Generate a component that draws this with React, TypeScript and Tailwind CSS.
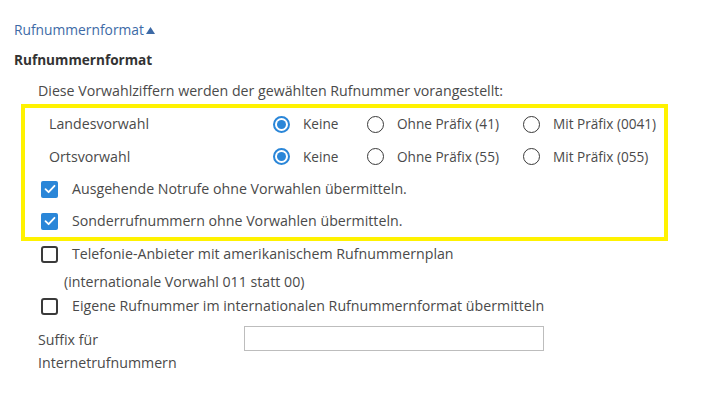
import React from 'react'

const font = { fontFamily: '"Open Sans", "Noto Sans", sans-serif' }

function Radio({ checked }: { checked?: boolean }) {
  return checked ? (
    <span className="flex h-[17px] w-[17px] shrink-0 items-center justify-center rounded-full border-2 border-[#2a86d8]">
      <span className="h-[9px] w-[9px] rounded-full bg-[#2a86d8]" />
    </span>
  ) : (
    <span className="h-[17px] w-[17px] shrink-0 rounded-full border-[1.5px] border-[#3a3a3a]" />
  )
}

function Checkbox({ checked }: { checked?: boolean }) {
  return checked ? (
    <span className="flex h-[17px] w-[17px] shrink-0 items-center justify-center rounded-[2px] bg-[#2a86d8]">
      <svg width="12" height="10" viewBox="0 0 12 10" fill="none">
        <path d="M1.5 5.2 L4.6 8.2 L10.5 1.8" stroke="white" strokeWidth="1.8" strokeLinecap="round" strokeLinejoin="round" />
      </svg>
    </span>
  ) : (
    <span className="h-[17px] w-[17px] shrink-0 rounded-[3px] border-2 border-[#3a3a3a]" />
  )
}

const rows = [
  { label: 'Landesvorwahl', opts: ['Keine', 'Ohne Präfix (41)', 'Mit Präfix (0041)'] },
  { label: 'Ortsvorwahl', opts: ['Keine', 'Ohne Präfix (55)', 'Mit Präfix (055)'] },
]

const colW = ['w-[94px]', 'w-[156px]', 'w-[140px]']

export default function App() {
  return (
    <div className="min-h-[393px] w-[721px] bg-white pl-[14px] pt-5 text-[14.2px] leading-5 text-[#4a4a4a]" style={font}>
      <div className="flex items-center text-[13.8px] text-[#3d6aa6]">
        Rufnummernformat
        <svg width="9" height="7" viewBox="0 0 9 7" className="ml-[2px]">
          <path d="M0 7 L4.5 0 L9 7 Z" fill="#3d6aa6" />
        </svg>
      </div>
      <div className="mt-[10px] text-[13.6px] font-bold text-[#333]">Rufnummernformat</div>
      <div className="mt-[11px] pl-6">Diese Vorwahlziffern werden der gewählten Rufnummer vorangestellt:</div>

      <div className="ml-[7px] mt-[3px] w-[647px] border-4 border-[#fff200]">
        {rows.map((r, i) => (
          <div key={r.label} className={`flex items-center ${i === 0 ? 'h-[32px]' : 'h-[33px]'}`}>
            <div className="w-[248px] pl-6">{r.label}</div>
            {r.opts.map((o, j) => (
              <div key={o} className={`flex items-center gap-[13px] text-[13.6px] ${colW[j]}`}>
                <Radio checked={j === 0} />
                <span>{o}</span>
              </div>
            ))}
          </div>
        ))}
        {['Ausgehende Notrufe ohne Vorwahlen übermitteln.', 'Sonderrufnummern ohne Vorwahlen übermitteln.'].map(t => (
          <div key={t} className="flex h-[32px] items-center gap-[14px] pl-4">
            <Checkbox checked />
            <span>{t}</span>
          </div>
        ))}
      </div>

      <div className="flex h-[26px] items-center gap-[14px] pl-[27px]">
        <Checkbox />
        <span>Telefonie-Anbieter mit amerikanischem Rufnummernplan</span>
      </div>
      <div className="flex h-[29px] items-center pl-[50px]">(internationale Vorwahl 011 statt 00)</div>
      <div className="flex h-[20px] items-center gap-[14px] pl-[27px]">
        <Checkbox />
        <span>Eigene Rufnummer im internationalen Rufnummernformat übermitteln</span>
      </div>

      <div className="mt-[10px] flex items-start pl-6">
        <div className="w-[206px] pt-[2px] leading-[23px]">
          Suffix für
          <br />
          Internetrufnummern
        </div>
        <input type="text" className="h-[25px] w-[300px] border border-[#bdbdbd] bg-white outline-none" />
      </div>
    </div>
  )
}
